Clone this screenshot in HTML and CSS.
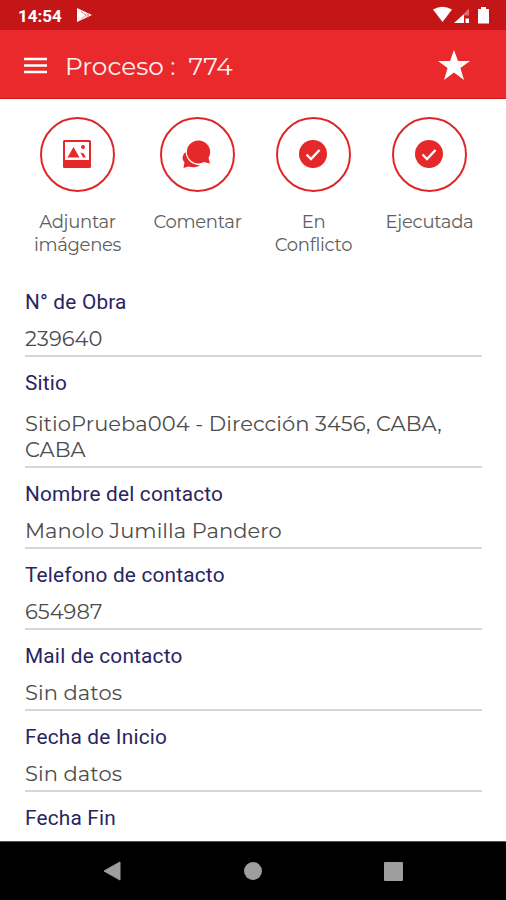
FILE: index.html
```html
<!DOCTYPE html>
<html lang="es">
<head>
<meta charset="utf-8">
<title>Proceso : 774</title>
<link rel="stylesheet" href="styles.css">
</head>
<body>
<div class="screen">
  <div class="status">
    <span class="time">14:54</span>
    <svg class="play" width="16" height="16" viewBox="0 0 16 16"><path d="M0 1 15 8 0 15Z" fill="#fff"/><path d="M4 4.500 9 8 4 12M9 6.500l3 1.500-3 1.500" fill="none" stroke="#c41617" stroke-opacity=".6" stroke-width=".8"/></svg>
    <svg class="signals" width="60" height="20" viewBox="0 0 60 20"><path d="M0 4.500Q9.500-1 19 4.500L9.500 17Z" fill="#fff"/><path d="M36 3.500v7h-5V8.500Z" fill="#e06a6b"/><path d="M21 18 31 9v9ZM32.500 13.500h3.500V18H32.500Z" fill="#fff"/><path d="M45 4h3V2h5v2h3v14.500H45Z" fill="#fff"/></svg>
  </div>
  <header class="bar">
    <svg class="menu" width="23" height="17" viewBox="0 0 23 17"><path d="M0 2h23M0 8.500h23M0 15h23" stroke="#fff" stroke-width="2.700"/></svg>
    <h1 class="title">Proceso :&nbsp; 774</h1>
    <svg class="star" width="32" height="30" viewBox="0 0 32 30"><path d="M16 0 20 11H32L22.400 18 26 30 16 22.500 6 30 9.600 18 0 11H12Z" fill="#fff"/></svg>
  </header>
  <main class="content">
    <nav class="actions">
      <div class="action action-images">
        <span class="ring"><svg width="28" height="28" viewBox="0 0 28 28"><path fill="#e5282a" fill-rule="evenodd" d="M1.500 0h25Q28 0 28 1.500V27q0 1-1.500 1h-25Q0 28 0 27V1.500Q0 0 1.500 0ZM2 2v18h24V2Z"/><path fill="#e5282a" d="M4.500 17.500 10.500 7l6 10.500ZM17.500 12.500l3 1 2.500 4h-3Z"/><circle cx="20" cy="7" r="2" fill="#e5282a"/></svg></span>
        <span class="caption">Adjuntar<br>imágenes</span>
      </div>
      <div class="action action-comment">
        <span class="ring"><svg width="29" height="29" viewBox="0 0 29 29"><path fill="#e5282a" d="M3.500 12C-.5 16 0 20 2.500 22L1.500 28l5-1.500Q13 28.500 18 25.500 5 24 3.500 12Z"/><path fill="#e5282a" d="M17 .5a11.500 11.500 0 0 1 9.500 17.500L28 23.500l-6-1.500A11.500 11.500 0 1 1 17 .5Z"/></svg></span>
        <span class="caption">Comentar</span>
      </div>
      <div class="action action-conflict">
        <span class="ring"><svg width="28" height="28" viewBox="0 0 28 28"><circle cx="14" cy="14" r="14" fill="#e5282a"/><path d="m7.500 14.500 4.500 4.500 8.500-9" fill="none" stroke="#fff" stroke-width="2.400"/></svg></span>
        <span class="caption">En<br>Conflicto</span>
      </div>
      <div class="action action-done">
        <span class="ring"><svg width="28" height="28" viewBox="0 0 28 28"><circle cx="14" cy="14" r="14" fill="#e5282a"/><path d="m7.500 14.500 4.500 4.500 8.500-9" fill="none" stroke="#fff" stroke-width="2.400"/></svg></span>
        <span class="caption">Ejecutada</span>
      </div>
    </nav>
    <section class="fields">
      <div class="field"><div class="label">N° de Obra</div><div class="value">239640</div></div>
      <div class="field multiline"><div class="label">Sitio</div><div class="value">SitioPrueba004 - Dirección 3456, CABA,<br>CABA</div></div>
      <div class="field"><div class="label">Nombre del contacto</div><div class="value">Manolo Jumilla Pandero</div></div>
      <div class="field"><div class="label">Telefono de contacto</div><div class="value">654987</div></div>
      <div class="field"><div class="label">Mail de contacto</div><div class="value">Sin datos</div></div>
      <div class="field"><div class="label">Fecha de Inicio</div><div class="value">Sin datos</div></div>
      <div class="field"><div class="label">Fecha Fin</div></div>
    </section>
  </main>
  <footer class="navbar">
    <svg width="18" height="20" viewBox="0 0 18 20"><path d="M17 1v18L1 10Z" fill="#9e9e9e" stroke="#9e9e9e" stroke-linejoin="round"/></svg>
    <span class="home"></span>
    <span class="recent"></span>
  </footer>
</div>
</body>
</html>
```
FILE: styles.css
```css
* { box-sizing: border-box; }
body { margin: 0; background: #fff; }
.screen {
  width: 506px;
  height: 900px;
  display: flex;
  flex-direction: column;
  overflow: hidden;
  font-family: Montserrat, Inter, sans-serif;
}
.screen svg { display: block; flex: none; }
.status {
  flex: none;
  height: 30px;
  padding: 0 16px 0 18px;
  display: flex;
  align-items: center;
  background: #c41617;
  color: #fff;
}
.time { font: 700 17px/30px Roboto, sans-serif; width: 59px; padding-top: 2px; }
.signals { margin-left: auto; margin-right: -3px; }
.bar {
  flex: none;
  height: 69px;
  padding: 2px 36px 0 24px;
  display: flex;
  align-items: center;
  background: #e9292b;
  border-bottom: 1px solid #cf1719;
  color: #fff;
}
.title { margin: 1px 0 0 18px; font-size: 24.8px; font-weight: 400; color: #ffeeee; white-space: nowrap; }
.star { margin-left: auto; }
.content { flex: 1; min-height: 0; overflow: hidden; }
.actions { height: 177px; padding: 18px 0 0 19px; display: flex; }
.action { flex: none; display: flex; flex-direction: column; align-items: center; width: 117px; }
.action-comment { width: 123px; }
.action-conflict { width: 109px; }
.action-done { width: 123px; }
.ring {
  width: 75px;
  height: 75px;
  padding-right: 1px;
  padding-bottom: 1px;
  border: 2px solid #e02527;
  border-radius: 50%;
  display: flex;
  align-items: center;
  justify-content: center;
}
.action-comment .ring { padding-right: 3px; }
.caption {
  margin-top: 19px;
  color: #606060;
  font-size: 18px;
  font-weight: 400;
  line-height: 23px;
  letter-spacing: -.3px;
  text-align: center;
}
.fields { padding: 0 24px 0 25px; }
.field { height: 81px; padding-top: 12px; border-bottom: 2px solid #d6d6d6; }
.field.multiline { height: 111px; }
.label { font: 400 20.8px/28px Roboto, sans-serif; color: #28255f; letter-spacing: .2px; }
.value { margin-top: 10px; font-size: 21px; font-weight: 400; line-height: 26px; color: #4c4c4c; white-space: nowrap; letter-spacing: .06px; }
.multiline .value { margin-top: 14px; }
.navbar {
  flex: none;
  height: 59px;
  padding: 0 103px;
  display: flex;
  align-items: center;
  justify-content: space-between;
  background: #000;
  border-top: 1px solid #555;
}
.home { width: 18px; height: 18px; border-radius: 50%; background: #9e9e9e; }
.recent { width: 19px; height: 19px; border-radius: 1px; background: #9e9e9e; }
```
